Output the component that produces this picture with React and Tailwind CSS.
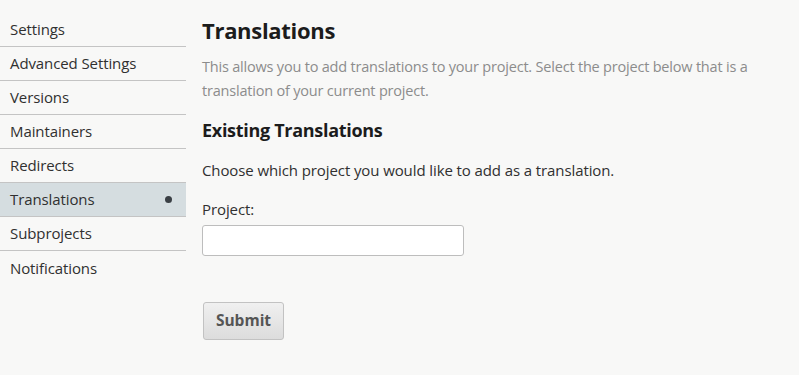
import React from "react";

const items = ["Settings", "Advanced Settings", "Versions", "Maintainers", "Redirects", "Translations", "Subprojects", "Notifications"];

const App = () => {
  return (
    <div className="w-[799px] h-[375px] bg-[#f8f8f7] text-[#303030] overflow-hidden flex" style={{ fontFamily: "'Open Sans', sans-serif" }}>
      <nav className="w-[186px] shrink-0 pt-[13px]">
        {items.map((item, index) => (
          <div
            key={item}
            className={
              "h-[34px] flex items-center justify-between pl-[10px] pr-[14px] text-[15px] font-medium tracking-[-0.1px] " +
              (index < items.length - 1 ? "border-b border-[#c4c4c4] " : "") +
              (item === "Translations" ? "bg-[#d5dde0]" : "")
            }
          >
            <span>{item}</span>
            {item === "Translations" && <span className="w-[7px] h-[7px] rounded-full bg-[#3a3f44]" />}
          </div>
        ))}
      </nav>
      <main className="pl-[16px] pt-[14px] flex-1">
        <h1 className="text-[22px] font-bold text-[#1c1c1c] leading-[32px] tracking-[-0.3px]">Translations</h1>
        <p className="mt-[9px] text-[14.5px] leading-[24px] text-[#8c8c8c] tracking-[-0.2px] w-[590px]">
          This allows you to add translations to your project. Select the project below that is a translation of your current project.
        </p>
        <h2 className="mt-[13px] text-[18px] font-bold text-[#1c1c1c] leading-[28px] tracking-[-0.3px]">Existing Translations</h2>
        <p className="mt-[15px] text-[15px] font-medium leading-[22px] tracking-[-0.1px]">Choose which project you would like to add as a translation.</p>
        <label className="block mt-[17px] text-[15px] font-medium leading-[22px] tracking-[-0.1px]">Project:</label>
        <input className="block mt-[5px] w-[262px] h-[31px] bg-white border border-[#bdbdbd] rounded-[3px]" />
        <button className="mt-[46px] ml-[1px] w-[81px] h-[38px] rounded-[3px] border border-[#c2c2c2] bg-gradient-to-b from-[#f0f0f0] to-[#dcdcdc] text-[15.5px] font-bold text-[#555]">
          Submit
        </button>
      </main>
    </div>
  );
};

export default App;
